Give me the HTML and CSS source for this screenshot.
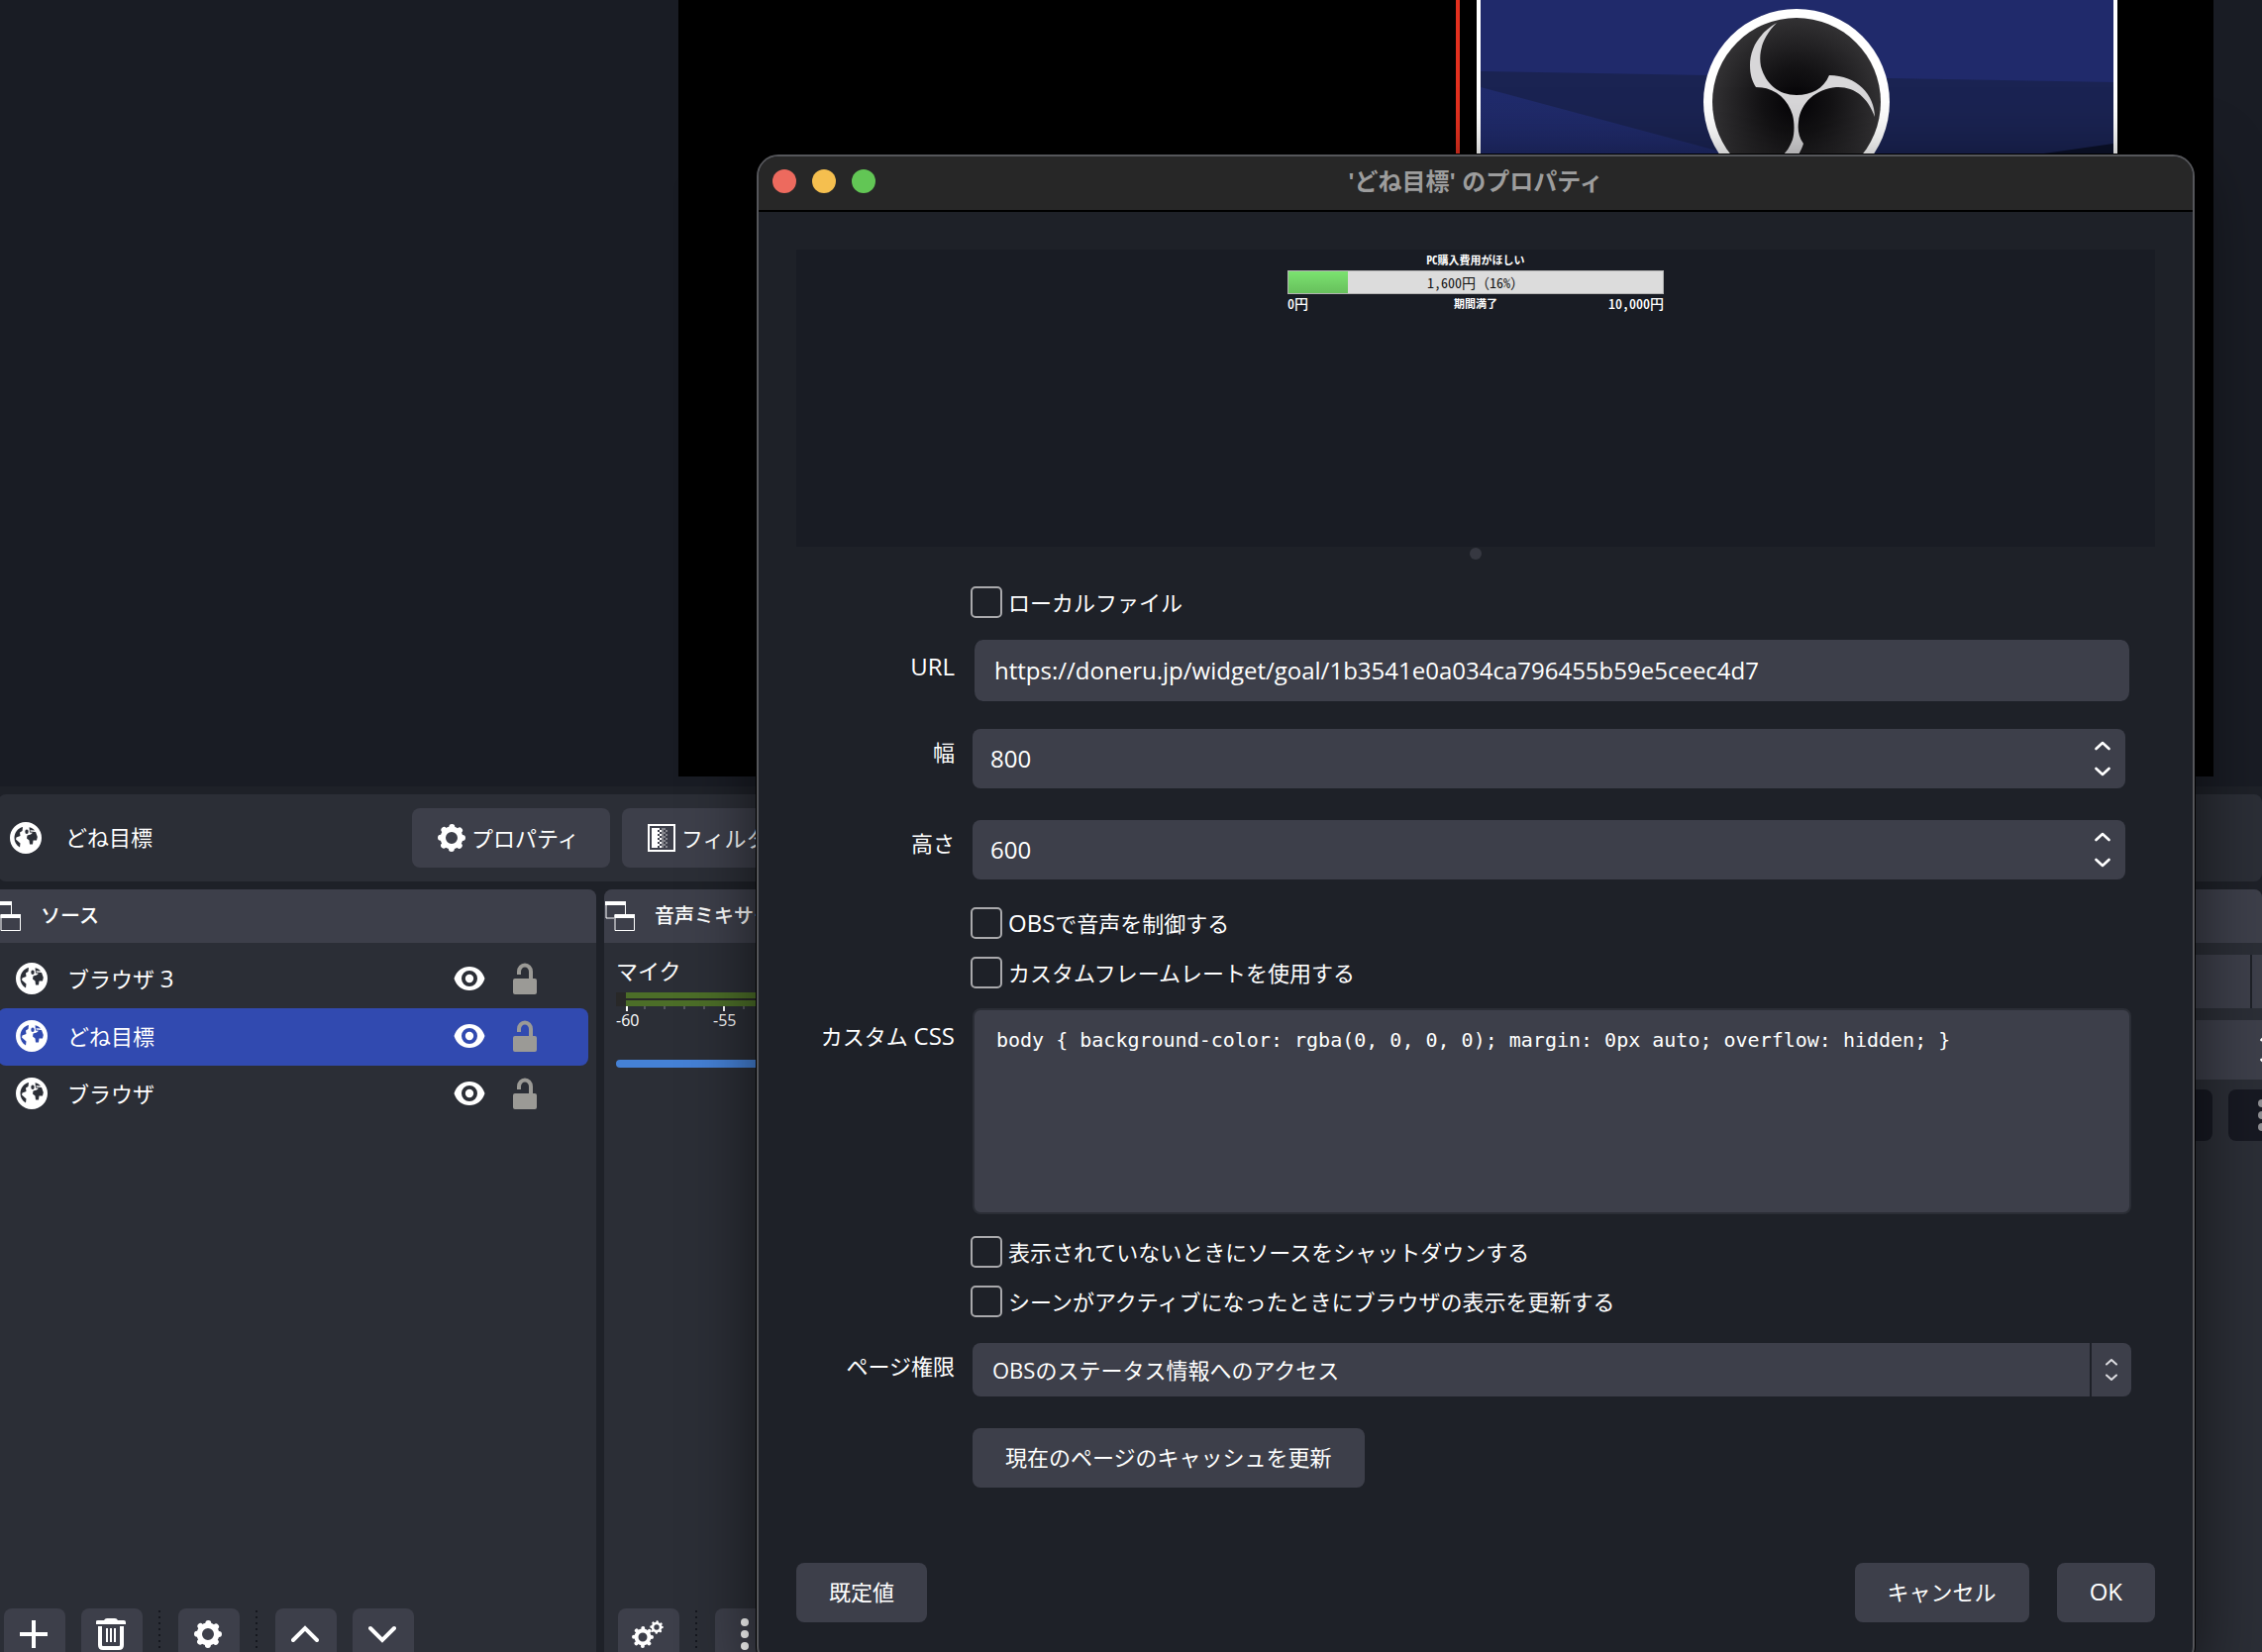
FILE: index.html
```html
<!DOCTYPE html>
<html lang="ja">
  <head>
    <meta charset="UTF-8" />
    <meta name="viewport" content="width=device-width, initial-scale=1.0" />
    <title>'どね目標' のプロパティ</title>
    <link rel="stylesheet" href="styles.css">
  </head>
  <body>
    <svg class="symbols" aria-hidden="true">
      <symbol id="globe" viewBox="0 0 32 32">
        <path fill="currentColor" fill-rule="evenodd" d="M16 0a16 16 0 1 1 0 32a16 16 0 1 1 0-32zM13 5C8 6 4.500 11 4.500 16C4.500 20 6.500 23.500 10 25.500L10.500 21.500L6 17.500L6.500 15.500L10.500 14L10 10.500L12.500 9zM17 7.500a1.700 2.300 0 1 0 0 4.600a1.700 2.300 0 1 0 0-4.600zM19.500 5.200C22 5.800 24 7 25 8.500L20.500 8.200L20.500 9.500L26 10L27.800 15L27 18.500L23.500 18.500L23 22.500L20 22.500L19.500 18.500L17 16.500L17.500 13.500L21 12.500L23 10.800L20 10.500z" />
      </symbol>
      <symbol id="gear" viewBox="0 0 28 28">
        <g fill="none" stroke="currentColor">
          <circle cx="14" cy="14" r="8.700" stroke-width="5.400" />
          <circle cx="14" cy="14" r="11" stroke-width="6" stroke-linecap="round" stroke-dasharray="0.010 8.630" />
        </g>
      </symbol>
      <symbol id="eye" viewBox="0 0 32 24">
        <path fill="currentColor" fill-rule="evenodd" d="M16 0C23 0 29 4 31.500 12C29 20 23 24 16 24C9 24 3 20 .5 12C3 4 9 0 16 0zM16 4a8 8 0 1 0 0 16a8 8 0 1 0 0-16z" />
        <circle cx="16" cy="12" r="4.200" fill="currentColor" />
      </symbol>
      <symbol id="lock" viewBox="0 0 24 32">
        <path d="M6 12V9a6 6.500 0 0 1 12 0V18" fill="none" stroke="#9b9a96" stroke-width="4" />
        <rect y="16" width="24" height="16" rx="2" fill="#9b9a96" />
      </symbol>
      <symbol id="popout" viewBox="0 0 30 30">
        <path d="M9 17H1V1H20.500V13M10 29.500V14H29.500V29.500z" fill="none" stroke="currentColor" />
        <path d="M0 0H21V4H0zM9.500 13H30V17H9.500z" fill="currentColor" />
      </symbol>
      <symbol id="updown" viewBox="0 0 16 38">
        <path d="M1.500 9L8 3L14.500 9M1.500 29L8 35L14.500 29" fill="none" stroke="currentColor" stroke-width="2.600" stroke-linecap="round" stroke-linejoin="round" />
      </symbol>
      <symbol id="dots" viewBox="0 0 8 32">
        <g fill="currentColor">
          <circle cx="4" cy="4" r="4" />
          <circle cx="4" cy="16" r="4" />
          <circle cx="4" cy="28" r="4" />
        </g>
      </symbol>
    </svg>

    <div class="app">
      <div class="preview">
        <div class="stage">
          <div class="guide"></div>
          <div class="scene">
            <svg viewBox="0 0 639 360" width="639" height="360">
              <defs>
                <radialGradient id="blade" cx="319" cy="103" r="86" gradientUnits="userSpaceOnUse">
                  <stop offset="0" stop-color="#040306" />
                  <stop offset="0.400" stop-color="#131214" />
                  <stop offset="1" stop-color="#333234" />
                </radialGradient>
                <linearGradient id="sky" x1="0" y1="0" x2="0" y2="1">
                  <stop offset="0" stop-color="#202b6c" />
                  <stop offset="1" stop-color="#1b2458" />
                </linearGradient>
              </defs>
              <rect width="639" height="360" fill="#202a6b" />
              <path d="M0 72L639 83V360H0z" fill="#1a2352" />
              <path d="M0 88L506 224V360H0z" fill="url(#sky)" />
              <path d="M569 155L639 145V360H400z" fill="#0b1129" />
              <circle cx="319" cy="103" r="94" fill="#fff" />
              <circle cx="319" cy="103" r="85" fill="url(#blade)" />
              <path fill="#d8d7d9" d="M299 23C280 34 272 50 272 66C272 75 274 82 278 88C296 88 310 99 315 116C317 124 317 134 315 141C312 149 309 153 304 158L314 166C320 158 324 152 326 145C321 138 320 131 321 123C323 103 339 90 359 88C377 87 391 98 398 118C398 96 380 76 352 76C346 90 334 96 319 96C301 96 288 85 283 67C280 51 286 36 299 23z" />
            </svg>
          </div>
        </div>
      </div>

      <div class="context-bar">
        <svg class="icon-globe"><use href="#globe" /></svg>
        <span class="context-name">どね目標</span>
        <button class="btn btn-icon">
          <svg class="icon-28"><use href="#gear" /></svg>プロパティ
        </button>
        <button class="btn btn-icon">
          <svg class="icon-28" viewBox="0 0 28 28">
            <rect x="1" y="1" width="26" height="26" fill="none" stroke="currentColor" stroke-width="2" />
            <rect x="4" y="4" width="6" height="20" fill="currentColor" />
            <path d="M11 4V24M13 6V24" stroke="currentColor" stroke-width="2" stroke-dasharray="2 2" />
            <path d="M15 4V24" stroke="#85868c" stroke-width="2" />
            <path d="M17 4V24M19 6V24" stroke="#85868c" stroke-width="2" stroke-dasharray="2 2" />
          </svg>フィルタ
        </button>
      </div>

      <div class="docks">
        <section class="dock sources">
          <h2 class="dock-title"><svg class="icon-30"><use href="#popout" /></svg>ソース</h2>
          <ul class="source-list">
            <li class="source">
              <svg class="icon-globe"><use href="#globe" /></svg>
              <span class="source-name">ブラウザ <span class="latin">3</span></span>
              <svg class="icon-eye"><use href="#eye" /></svg>
              <svg class="icon-lock"><use href="#lock" /></svg>
            </li>
            <li class="source selected">
              <svg class="icon-globe"><use href="#globe" /></svg>
              <span class="source-name">どね目標</span>
              <svg class="icon-eye"><use href="#eye" /></svg>
              <svg class="icon-lock"><use href="#lock" /></svg>
            </li>
            <li class="source">
              <svg class="icon-globe"><use href="#globe" /></svg>
              <span class="source-name">ブラウザ</span>
              <svg class="icon-eye"><use href="#eye" /></svg>
              <svg class="icon-lock"><use href="#lock" /></svg>
            </li>
          </ul>
          <div class="dock-tools">
            <button class="tool" aria-label="追加">
              <svg class="icon-28" viewBox="0 0 28 28"><path d="M14 0V28M0 14H28" stroke="currentColor" stroke-width="4" /></svg>
            </button>
            <button class="tool" aria-label="削除">
              <svg class="icon-32" viewBox="0 0 32 32">
                <path d="M1 3Q1 2 3 2H9Q10 0 12 0H20Q22 0 23 2H29Q31 2 31 4V6H1z" fill="currentColor" />
                <path d="M5 8V27Q5 30 8 30H24Q27 30 27 27V8" fill="none" stroke="currentColor" stroke-width="4" />
                <path d="M12 10V24M16 10V24M20 10V24" stroke="currentColor" stroke-width="2" />
              </svg>
            </button>
            <span class="tool-sep"></span>
            <button class="tool" aria-label="設定">
              <svg class="icon-28"><use href="#gear" /></svg>
            </button>
            <span class="tool-sep"></span>
            <button class="tool" aria-label="上へ">
              <svg class="icon-28" viewBox="0 0 28 28"><path d="M2 20L14 8L26 20" fill="none" stroke="currentColor" stroke-width="4" stroke-linecap="round" /></svg>
            </button>
            <button class="tool" aria-label="下へ">
              <svg class="icon-28" viewBox="0 0 28 28"><path d="M2 8L14 20L26 8" fill="none" stroke="currentColor" stroke-width="4" stroke-linecap="round" /></svg>
            </button>
          </div>
        </section>

        <section class="dock mixer">
          <h2 class="dock-title"><svg class="icon-30"><use href="#popout" /></svg>音声ミキサー</h2>
          <div class="channel">
            <label class="channel-name" for="mic">マイク</label>
            <div class="meter"><div class="meter-bar"></div><div class="meter-bar"></div></div>
            <div class="ticks">
              <span class="tick">-60</span>
              <span class="tick">-55</span>
            </div>
            <input class="volume" type="range" id="mic" value="100" />
          </div>
          <div class="dock-tools">
            <button class="tool" aria-label="詳細設定">
              <svg class="icon-32" viewBox="0 0 32 32">
                <g fill="none" stroke="currentColor">
                  <circle cx="11" cy="19" r="6.500" stroke-width="4" />
                  <circle cx="11" cy="19" r="9" stroke-width="4" stroke-linecap="round" stroke-dasharray="0.010 7.060" />
                  <circle cx="25" cy="9" r="4" stroke-width="2.600" />
                  <circle cx="25" cy="9" r="5.500" stroke-width="2.600" stroke-linecap="round" stroke-dasharray="0.010 4.310" />
                </g>
              </svg>
            </button>
            <span class="tool-sep"></span>
            <button class="tool" aria-label="メニュー">
              <svg class="icon-dots"><use href="#dots" /></svg>
            </button>
          </div>
        </section>

        <section class="dock transitions">
          <h2 class="dock-title"></h2>
          <div class="side-body">
            <div class="side-combo"></div>
            <div class="side-spin"><svg class="icon-spin"><use href="#updown" /></svg></div>
            <div class="side-buttons">
              <button class="dark-btn" aria-label="削除"></button>
              <button class="dark-btn" aria-label="トランジション"><svg class="icon-dots"><use href="#dots" /></svg></button>
            </div>
          </div>
        </section>
      </div>

      <div class="dialog" role="dialog" aria-labelledby="dialog-title">
        <header class="titlebar">
          <div class="lights">
            <span class="light close"></span>
            <span class="light minimize"></span>
            <span class="light zoom"></span>
          </div>
          <h1 class="title" id="dialog-title">'どね目標' のプロパティ</h1>
        </header>

        <form class="dialog-body">
          <div class="source-preview">
            <div class="goal">
              <p class="goal-title">PC購入費用がほしい</p>
              <div class="goal-bar">
                <div class="goal-fill" style="width: 16%"></div>
                <span class="goal-value">1,600円<span class="full">（</span>16%<span class="full">）</span></span>
              </div>
              <div class="goal-scale">
                <span>0円</span>
                <span class="goal-term">期間満了</span>
                <span>10,000円</span>
              </div>
            </div>
          </div>
          <div class="splitter"></div>

          <label class="check"><input type="checkbox" />ローカルファイル</label>

          <div class="row row-text">
            <label class="latin" for="url">URL</label>
            <input class="field latin" type="text" id="url" value="https://doneru.jp/widget/goal/1b3541e0a034ca796455b59e5ceec4d7" />
          </div>
          <div class="row row-spin">
            <label for="width">幅</label>
            <div class="spin">
              <input class="field latin" type="number" id="width" value="800" />
              <svg class="icon-spin"><use href="#updown" /></svg>
            </div>
          </div>
          <div class="row row-spin">
            <label for="height">高さ</label>
            <div class="spin">
              <input class="field latin" type="number" id="height" value="600" />
              <svg class="icon-spin"><use href="#updown" /></svg>
            </div>
          </div>

          <label class="check"><input type="checkbox" /><span><span class="latin">OBS</span>で音声を制御する</span></label>
          <label class="check"><input type="checkbox" />カスタムフレームレートを使用する</label>

          <div class="row row-area">
            <label for="css">カスタム <span class="latin">CSS</span></label>
            <textarea class="field" id="css" spellcheck="false">body { background-color: rgba(0, 0, 0, 0); margin: 0px auto; overflow: hidden; }</textarea>
          </div>

          <label class="check"><input type="checkbox" />表示されていないときにソースをシャットダウンする</label>
          <label class="check"><input type="checkbox" />シーンがアクティブになったときにブラウザの表示を更新する</label>

          <div class="row row-select">
            <label for="access">ページ権限</label>
            <div class="combo">
              <select class="field" id="access">
                <option>OBSのステータス情報へのアクセス</option>
              </select>
              <span class="combo-arrow">
                <svg class="icon-combo" viewBox="0 0 12 24"><path d="M1 6.500L6 2L11 6.500M1 17.500L6 22L11 17.500" fill="none" stroke="#dcdce0" stroke-width="2" stroke-linecap="round" stroke-linejoin="round" /></svg>
              </span>
            </div>
          </div>
          <div class="row row-button">
            <button class="btn" type="button">現在のページのキャッシュを更新</button>
          </div>

          <footer class="dialog-footer">
            <button class="btn" type="button">既定値</button>
            <button class="btn cancel" type="button">キャンセル</button>
            <button class="btn latin" type="button">OK</button>
          </footer>
        </form>
      </div>
    </div>
  </body>
</html>
```
FILE: styles.css
```css
* {
  box-sizing: border-box;
}
body {
  margin: 0;
  background: #1e2128;
  color: #fff;
  font-family: "Open Sans", "Noto Sans CJK JP", sans-serif;
  font-size: 22px;
  line-height: 32px;
  height: 100vh;
  overflow: hidden;
}
button,
input,
select,
textarea {
  font: inherit;
  color: inherit;
  border: none;
  margin: 0;
}
h1,
h2,
p,
ul {
  margin: 0;
  padding: 0;
}
svg {
  display: block;
  flex: none;
}
.symbols {
  display: none;
}
.latin {
  font-size: 24px;
}
.app {
  position: relative;
  display: flex;
  flex-direction: column;
  height: calc(100vh + 16px);
  overflow: hidden;
}

/* icons */
.icon-28 {
  width: 28px;
  height: 28px;
}
.icon-30 {
  width: 30px;
  height: 30px;
}
.icon-32,
.icon-globe {
  width: 32px;
  height: 32px;
}
.icon-eye {
  width: 32px;
  height: 24px;
}
.icon-lock {
  width: 24px;
  height: 32px;
}
.icon-dots {
  width: 8px;
  height: 32px;
}
.icon-spin {
  width: 16px;
  height: 38px;
}
.icon-combo {
  width: 12px;
  height: 24px;
}

/* preview */
.preview {
  background: #191c24;
  padding: 0 49px 10px 685px;
}
.stage {
  display: flex;
  justify-content: flex-end;
  gap: 17px;
  height: 784px;
  padding-right: 97px;
  background: #000;
}
.guide {
  width: 4px;
  background: #e3301f;
}
.scene {
  width: 647px;
  border: solid #fff;
  border-width: 0 4px;
  background: #1b2458;
}

/* context bar */
.context-bar {
  display: flex;
  align-items: center;
  margin: 8px 0 8px -2px;
  padding: 14px 12px;
  background: #2b2e36;
  border-radius: 8px;
}
.context-name {
  width: 350px;
  margin-left: 24px;
  padding-bottom: 2px;
}
.btn {
  height: 60px;
  padding: 0 33px 2px;
  background: #3d3f4a;
  border-radius: 8px;
  white-space: nowrap;
}
.btn-icon {
  display: flex;
  align-items: center;
  gap: 6px;
  width: 200px;
  margin-right: 12px;
  padding: 0 26px;
}

/* docks */
.docks {
  flex: 1;
  display: grid;
  grid-template-columns: 612px 1fr 500px;
  gap: 8px;
  margin-left: -10px;
}
.dock {
  display: flex;
  flex-direction: column;
  background: #2b2e36;
  border-radius: 8px 8px 0 0;
}
.dock-title {
  display: flex;
  align-items: center;
  gap: 20px;
  height: 54px;
  padding-left: 1px;
  background: #3d3f4a;
  border-radius: 8px 8px 0 0;
  font-size: 20px;
  font-weight: 500;
}
.source-list {
  flex: 1;
  padding: 8px 8px 0;
  list-style: none;
}
.source {
  display: flex;
  align-items: center;
  height: 58px;
  padding: 0 52px 2px 18px;
  border-radius: 8px;
}
.source.selected {
  background: #314ab0;
}
.source-name {
  flex: 1;
  margin-left: 20px;
}
.source .icon-lock {
  margin-left: 28px;
}
.dock-tools {
  display: flex;
  gap: 16px;
  padding: 0 14px 8px;
}
.tool {
  display: flex;
  align-items: center;
  justify-content: center;
  width: 62px;
  height: 52px;
  padding: 0 2px 0 0;
  background: #3d3f4a;
  border-radius: 8px;
}
.tool-sep {
  width: 4px;
  background: repeating-linear-gradient(#15171e 0 2px, transparent 2px 6px) 0 2px / 2px 100% no-repeat;
}

/* mixer */
.channel {
  flex: 1;
  padding: 12px 0 0 12px;
}
.channel-name {
  display: block;
}
.meter {
  display: grid;
  gap: 2px;
  height: 14px;
  margin-top: 6px;
  padding-left: 10px;
  background: #282828;
}
.meter-bar {
  background: #4c6e28;
}
.ticks {
  display: flex;
  height: 42px;
  padding-top: 4px;
  background:
    repeating-linear-gradient(90deg, #fff 0 2px, transparent 2px 98px) 10px 0 / 100% 5px no-repeat,
    repeating-linear-gradient(90deg, transparent 0 18px, #55575f 18px 20px) 10px 0 / 100% 3px no-repeat;
}
.tick {
  width: 98px;
  font-size: 16px;
  line-height: 20px;
}
.volume {
  display: block;
  appearance: none;
  width: 100%;
  height: 8px;
  margin-top: 12px;
  background: #4581d6;
  border-radius: 4px;
}
.volume::-webkit-slider-thumb {
  appearance: none;
  width: 20px;
  height: 8px;
}

/* transitions */
.side-body {
  padding: 12px 0 0 12px;
}
.side-combo {
  height: 54px;
  background: linear-gradient(#1e2128, #1e2128) right 10px top / 2px 100% no-repeat #3d3f4a;
}
.side-spin {
  display: flex;
  align-items: center;
  justify-content: flex-end;
  height: 60px;
  margin: 12px -14px 0 0;
  background: #3d3f4a;
}
.side-buttons {
  display: flex;
  justify-content: flex-end;
  gap: 16px;
  margin: 10px -34px 0 0;
}
.dark-btn {
  display: flex;
  align-items: center;
  justify-content: center;
  width: 68px;
  height: 52px;
  background: #171922;
  border-radius: 8px;
  color: #8f8f93;
}

/* dialog */
.dialog {
  position: absolute;
  top: 156px;
  left: 764px;
  right: 68px;
  bottom: 0;
  background: #1e2128;
  border: 2px solid #55565a;
  border-radius: 22px;
  box-shadow: 0 0 0 1px #000, 0 16px 70px rgba(0, 0, 0, 0.6);
  overflow: hidden;
}
.titlebar {
  position: relative;
  display: flex;
  align-items: center;
  justify-content: center;
  height: 56px;
  padding-bottom: 4px;
  background: #272727;
  border-bottom: 2px solid #000;
}
.lights {
  position: absolute;
  left: 14px;
  display: flex;
  gap: 16px;
}
.light {
  width: 24px;
  height: 24px;
  border-radius: 50%;
}
.close {
  background: #ed6a5e;
}
.minimize {
  background: #f5bf4f;
}
.zoom {
  background: #62c655;
}
.title {
  color: #9d9d9d;
  font-size: 24px;
  font-weight: bold;
}
.dialog-body {
  display: flex;
  flex-direction: column;
  padding: 38px;
}
.source-preview {
  height: 300px;
  background: #191c24;
}
.splitter {
  width: 12px;
  height: 12px;
  margin: 1px auto 18px;
  background: #363841;
  border-radius: 50%;
}

/* goal widget */
.goal {
  width: 380px;
  margin: 0 auto;
  font-family: "Noto Sans CJK JP", sans-serif;
  font-feature-settings: "hwid";
  font-size: 14px;
  font-weight: 500;
}
.goal-title,
.goal-term {
  font-size: 11px;
  font-weight: bold;
}
.goal-title {
  line-height: 21px;
  text-align: center;
}
.goal-bar {
  position: relative;
  height: 24px;
  background: #dcdcdc;
  border: 1px solid #b4b4b4;
}
.goal-fill {
  height: 100%;
  background: linear-gradient(#7be270, #67c05c);
}
.goal-value {
  position: absolute;
  inset: 0;
  color: #111;
  font-weight: normal;
  line-height: 22px;
  text-align: center;
}
.full {
  font-feature-settings: normal;
}
.goal-scale {
  display: grid;
  grid-template-columns: 1fr auto 1fr;
  line-height: 18px;
}
.goal-scale span:last-child {
  text-align: right;
}

/* form */
.check {
  display: flex;
  align-items: center;
  gap: 6px;
  height: 50px;
  margin-left: 176px;
}
.check input {
  appearance: none;
  width: 32px;
  height: 32px;
  border: 2px solid #a9a9ac;
  border-radius: 5px;
}
.row {
  display: grid;
  grid-template-columns: 160px 1fr;
  gap: 18px;
  align-items: start;
  padding-right: 24px;
}
.row label {
  padding-top: 7px;
  text-align: right;
}
.field {
  display: block;
  width: 100%;
  background: #3d3f4a;
  border-radius: 8px;
  outline: none;
}
.row-text {
  margin: 13px 0 15px;
}
.row-text label {
  padding-top: 11px;
}
.row-text .field {
  height: 62px;
  padding: 0 20px 2px;
  border: solid #1e2128;
  border-width: 0 2px;
  border-radius: 10px;
}
.row-spin {
  margin: 13px 0 19px;
}
.spin,
.combo {
  position: relative;
}
.spin {
  margin-right: 6px;
}
.spin .field {
  appearance: textfield;
  height: 60px;
  padding: 0 18px 2px;
}
.spin .field::-webkit-inner-spin-button {
  appearance: none;
}
.spin .icon-spin {
  position: absolute;
  top: 11px;
  right: 15px;
}
.row-area {
  margin: 11px 0 13px;
}
.row-area label {
  padding-top: 12px;
}
.row-area .field {
  height: 208px;
  padding: 14px 22px;
  border: 2px solid #2b2e36;
  font-family: "DejaVu Sans Mono", monospace;
  font-size: 20px;
  resize: none;
}
.row-select {
  margin: 17px 0 16px;
}
.combo .field {
  appearance: none;
  height: 54px;
  padding: 0 20px;
}
.combo-arrow {
  position: absolute;
  top: 0;
  right: 0;
  display: flex;
  align-items: center;
  justify-content: center;
  width: 42px;
  height: 54px;
  border-left: 2px solid #1e2128;
  pointer-events: none;
}
.row-button {
  margin-top: 16px;
}
.row-button .btn {
  grid-column: 2;
  justify-self: start;
}
.dialog-footer {
  display: flex;
  gap: 28px;
  margin-top: 76px;
}
.cancel {
  margin-left: auto;
}
```
